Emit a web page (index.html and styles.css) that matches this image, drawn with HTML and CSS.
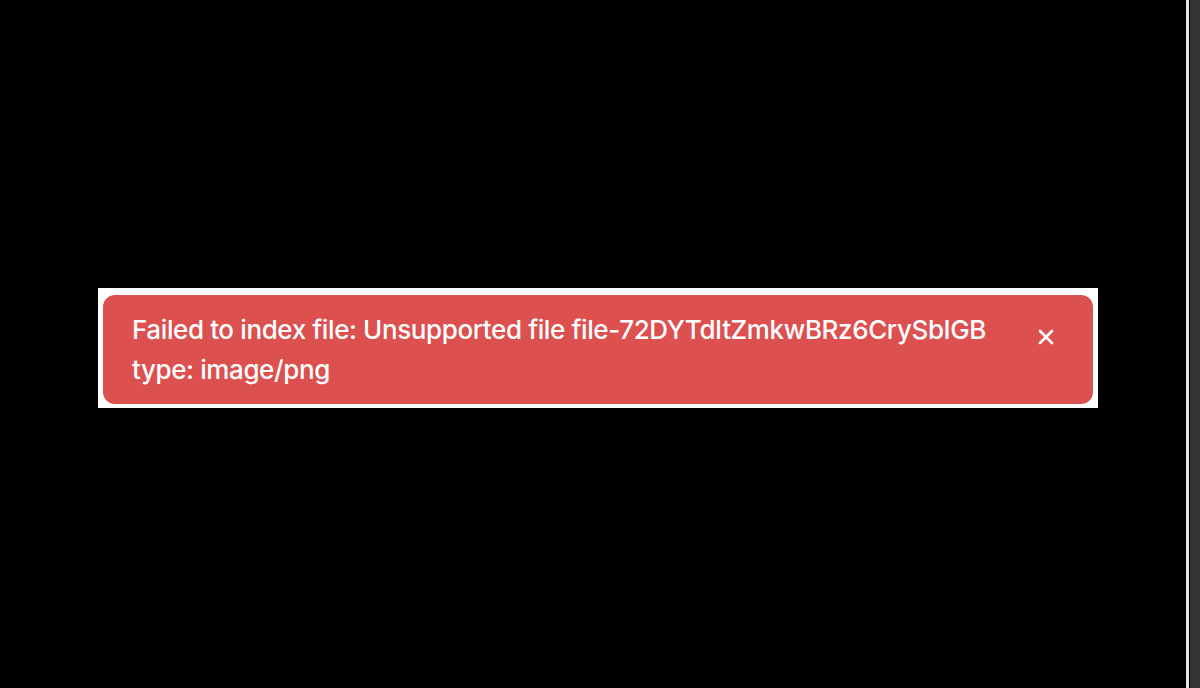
FILE: index.html
```html
<!DOCTYPE html>
<html lang="en">
<head>
<meta charset="utf-8">
<title>Toast</title>
<link rel="stylesheet" href="styles.css">
</head>
<body>
<div class="screen">
  <main class="stage">
    <div class="panel">
      <div class="toast" role="alert">
        <p class="toast-text">Failed to index file: Unsupported file file-72DYTdItZmkwBRz6CrySbIGB type: image/png</p>
        <button class="toast-close" aria-label="Close">
          <svg width="18" height="18" viewBox="0 0 18 18" fill="none" stroke="currentColor" stroke-width="2.6" stroke-linecap="round"><path d="M3 3L15 15M15 3L3 15"/></svg>
        </button>
      </div>
    </div>
  </main>
  <div class="edge">
    <div class="edge-line"></div>
    <div class="edge-bar"></div>
  </div>
</div>
</body>
</html>
```
FILE: styles.css
```css
html, body {
  margin: 0;
  padding: 0;
  background: #000;
  height: 100%;
}
.screen {
  display: flex;
  width: 1200px;
  height: 688px;
}
.stage {
  flex: 1;
  padding-top: 288px;
  padding-left: 98px;
}
.panel {
  width: 1000px;
  height: 120px;
  background: #fff;
  box-sizing: border-box;
  padding: 7px 5px 4px 5px;
}
.toast {
  height: 100%;
  box-sizing: border-box;
  background: #dc504f;
  border-radius: 12px;
  display: flex;
  align-items: flex-start;
  padding: 15px 38px 0 29px;
  font-family: Inter, "Noto Sans", sans-serif;
  color: #fff;
}
.toast-text {
  margin: 0;
  width: 880px;
  font-size: 26px;
  line-height: 40px;
  font-weight: 500;
  letter-spacing: -0.39px;
}
.toast-close {
  margin-left: auto;
  margin-top: 18px;
  background: none;
  border: 0;
  padding: 0;
  color: #fff;
  width: 18px;
  height: 18px;
  display: flex;
}
.edge {
  width: 14px;
  display: flex;
}
.edge-line {
  width: 3px;
  background: #e6e6e6;
}
.edge-bar {
  flex: 1;
  margin-left: 1px;
  background: #333;
}
```
